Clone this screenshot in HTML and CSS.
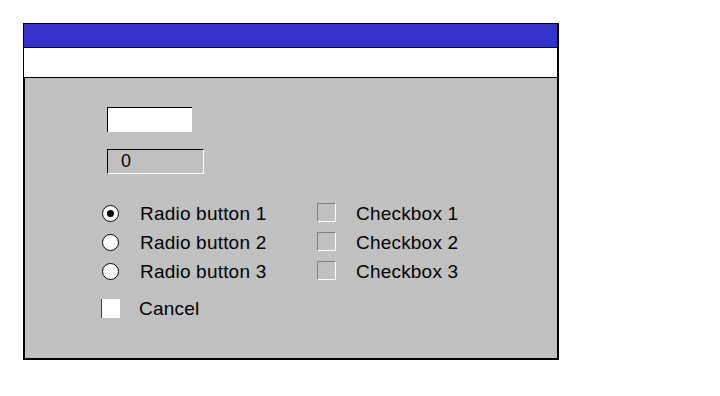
FILE: index.html
```html
<!DOCTYPE html>
<html lang="en">
<head>
    <meta charset="UTF-8">
    <title>Dialog</title>
    <link rel="stylesheet" href="styles.css">
</head>
<body>
    <div class="window">
        <div class="title-bar"></div>
        <div class="menu-bar"></div>
        <div class="panel">
            <div class="field field-edit"></div>
            <div class="field field-readonly">0</div>

            <div class="options">
                <div class="option">
                    <span class="radio checked"></span>
                    <span class="label">Radio button 1</span>
                </div>
                <div class="option">
                    <span class="check"></span>
                    <span class="label">Checkbox 1</span>
                </div>
                <div class="option">
                    <span class="radio"></span>
                    <span class="label">Radio button 2</span>
                </div>
                <div class="option">
                    <span class="check"></span>
                    <span class="label">Checkbox 2</span>
                </div>
                <div class="option">
                    <span class="radio"></span>
                    <span class="label">Radio button 3</span>
                </div>
                <div class="option">
                    <span class="check"></span>
                    <span class="label">Checkbox 3</span>
                </div>
            </div>

            <div class="option cancel">
                <span class="cancel-box"></span>
                <span class="label">Cancel</span>
            </div>
        </div>
    </div>
</body>
</html>
```

FILE: styles.css
```css
body {
    margin: 0;
    padding: 23px 0 0 23px;
    background-color: #ffffff;
    font-family: 'Liberation Sans', Arial, sans-serif;
    font-size: 19px;
    color: #000;
}
.window {
    width: 533px;
    border-top: 1px solid #000;
    border-left: 1px solid #000;
    border-right: 2px solid #000;
    border-bottom: 2px solid #000;
}
.title-bar {
    height: 23px;
    background-color: #3333cc;
    border-bottom: 1px solid #000;
}
.menu-bar {
    height: 29px;
    background-color: #ffffff;
    border-bottom: 1px solid #000;
}
.panel {
    height: 251px;
    padding: 29px 0 0 76px;
    background-color: #c0c0c0;
    border-left: 1px solid #000;
}
.field {
    margin-left: 6px;
    border-top: 1px solid #000;
    border-left: 1px solid #000;
    box-sizing: border-box;
}
.field-edit {
    width: 85px;
    height: 25px;
    background-color: #ffffff;
}
.field-readonly {
    width: 97px;
    height: 25px;
    margin-top: 17px;
    padding-left: 13px;
    line-height: 23px;
    font-size: 18px;
    border-right: 1px solid #fff;
    border-bottom: 1px solid #fff;
}
.options {
    display: grid;
    grid-template-columns: 216px auto;
    margin-top: 25px;
}
.option {
    display: flex;
    align-items: center;
    height: 29px;
}
.radio {
    position: relative;
    width: 17px;
    height: 17px;
    margin-left: 1px;
    margin-right: 21px;
    box-sizing: border-box;
    border: 1px solid #000;
    border-radius: 50%;
    background-color: #fff;
}
.radio.checked::after {
    content: "";
    position: absolute;
    left: 4px;
    top: 4px;
    width: 7px;
    height: 7px;
    border-radius: 50%;
    background-color: #000;
}
.check {
    width: 19px;
    height: 19px;
    margin-right: 20px;
    margin-top: -3px;
    box-sizing: border-box;
    border-top: 1px solid #808080;
    border-left: 1px solid #808080;
    border-right: 1px solid #fff;
    border-bottom: 1px solid #fff;
}
.cancel {
    height: 28px;
    margin-top: 8px;
}
.cancel-box {
    width: 19px;
    height: 19px;
    margin-right: 19px;
    box-sizing: border-box;
    background-color: #fff;
    border-left: 1px solid #404040;
}
.label {
    line-height: 1;
    letter-spacing: 0.2px;
}
```
